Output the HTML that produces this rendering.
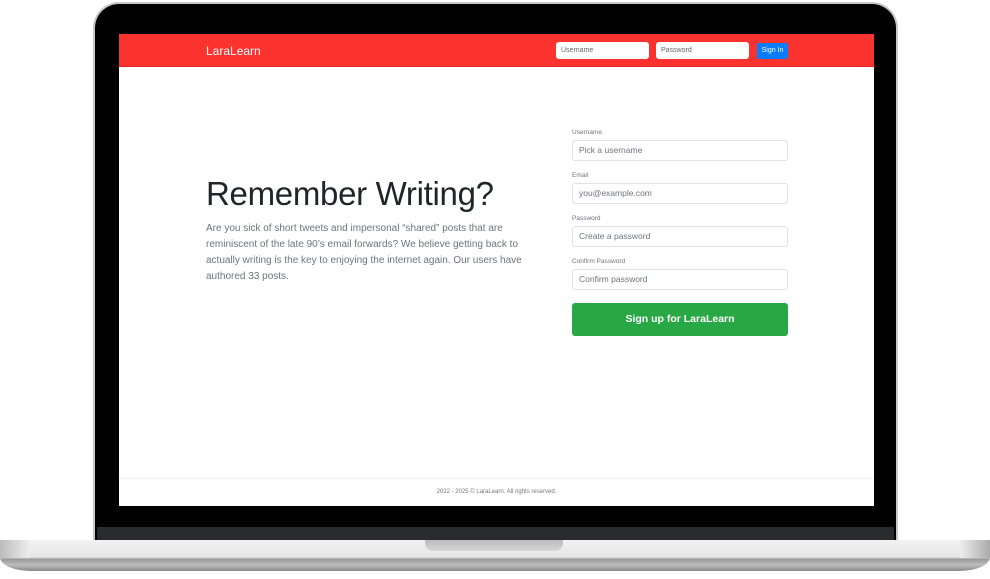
<!DOCTYPE html>
<html><head><meta charset="utf-8"><style>
*{margin:0;padding:0;box-sizing:border-box}
body{width:990px;height:579px;background:#fff;position:relative;overflow:hidden;font-family:"Liberation Sans",sans-serif}
.abs{position:absolute}
.lid{left:93px;top:2px;width:805px;height:545px;border-radius:26px 26px 0 0;background:#000;border:2px solid #c8c8c8;border-bottom:none}
.lidbot{left:97px;top:527px;width:797px;height:14px;background:#2a2b2e}
.screen{left:119px;top:34px;width:755px;height:472px;background:#fff;overflow:hidden}
.hdr{left:0;top:0;width:755px;height:33px;background:#fb322e;border-bottom:1px solid #e8231f}
.brand{left:87px;top:10px;color:#fff;font-size:12px}
.hin{top:8px;height:17px;width:93px;background:#fff;border-radius:3px;font-size:7px;color:#666;padding:0 5px;line-height:17px}
.btn{left:638px;top:9px;width:31px;height:16px;background:#0b7bff;border-radius:2px;color:#fff;font-size:7px;text-align:center;line-height:16px}
h1{position:absolute;left:87px;top:141px;font-weight:normal;font-size:33px;color:#212529;letter-spacing:-0.3px;white-space:nowrap}
.p{left:87px;top:187px;width:320px;font-size:10px;line-height:16px;color:#6c757d}
.lbl{left:453px;font-size:6.5px;color:#6c757d}
.inp{left:453px;width:216px;height:21px;border:1px solid #dfe2e6;border-radius:3px;font-size:8.5px;color:#6c757d;padding:0 6px;line-height:19px}
.sub{left:453px;top:269px;width:216px;height:33px;background:#28a745;border-radius:3px;color:#fff;font-size:10.5px;text-align:center;line-height:33px;font-weight:bold}
.foot{left:0;top:444px;width:755px;height:28px;border-top:1px solid #eee;text-align:center;font-size:6px;color:#777;line-height:26px}
.base{left:0;top:540px;width:990px;height:31px;border-radius:2px 2px 30px 30px/2px 2px 14px 14px;background:linear-gradient(#f2f2f2 0,#e6e6e6 55%,#9a9a9a 62%,#bdbdbd 80%,#8a8a8a 100%)}
.baseL{left:0;top:540px;width:30px;height:18px;background:linear-gradient(90deg,#bbb,#eee)}
.baseR{left:960px;top:540px;width:30px;height:18px;background:linear-gradient(90deg,#eee,#aaa)}
.notch{left:425px;top:540px;width:138px;height:11px;background:linear-gradient(#bcbcbc,#d5d5d5);border-radius:0 0 8px 8px}
</style></head><body>
<div class="abs lid"></div>
<div class="abs lidbot"></div>
<div class="abs screen">
 <div class="abs hdr">
  <div class="abs brand">LaraLearn</div>
  <div class="abs hin" style="left:437px">Username</div>
  <div class="abs hin" style="left:537px">Password</div>
  <div class="abs btn">Sign In</div>
 </div>
 <h1>Remember Writing?</h1>
 <div class="abs p">Are you sick of short tweets and impersonal “shared” posts that are reminiscent of the late 90’s email forwards? We believe getting back to actually writing is the key to enjoying the internet again. Our users have authored 33 posts.</div>
 <div class="abs lbl" style="top:95px">Username</div>
 <div class="abs inp" style="top:106px">Pick a username</div>
 <div class="abs lbl" style="top:138px">Email</div>
 <div class="abs inp" style="top:149px">you@example.com</div>
 <div class="abs lbl" style="top:181px">Password</div>
 <div class="abs inp" style="top:192px">Create a password</div>
 <div class="abs lbl" style="top:224px">Confirm Password</div>
 <div class="abs inp" style="top:235px">Confirm password</div>
 <div class="abs sub">Sign up for LaraLearn</div>
 <div class="abs foot">2022 - 2025 © LaraLearn. All rights reserved.</div>
</div>
<div class="abs base"></div>
<div class="abs baseL"></div>
<div class="abs baseR"></div>
<div class="abs notch"></div>
</body></html>
